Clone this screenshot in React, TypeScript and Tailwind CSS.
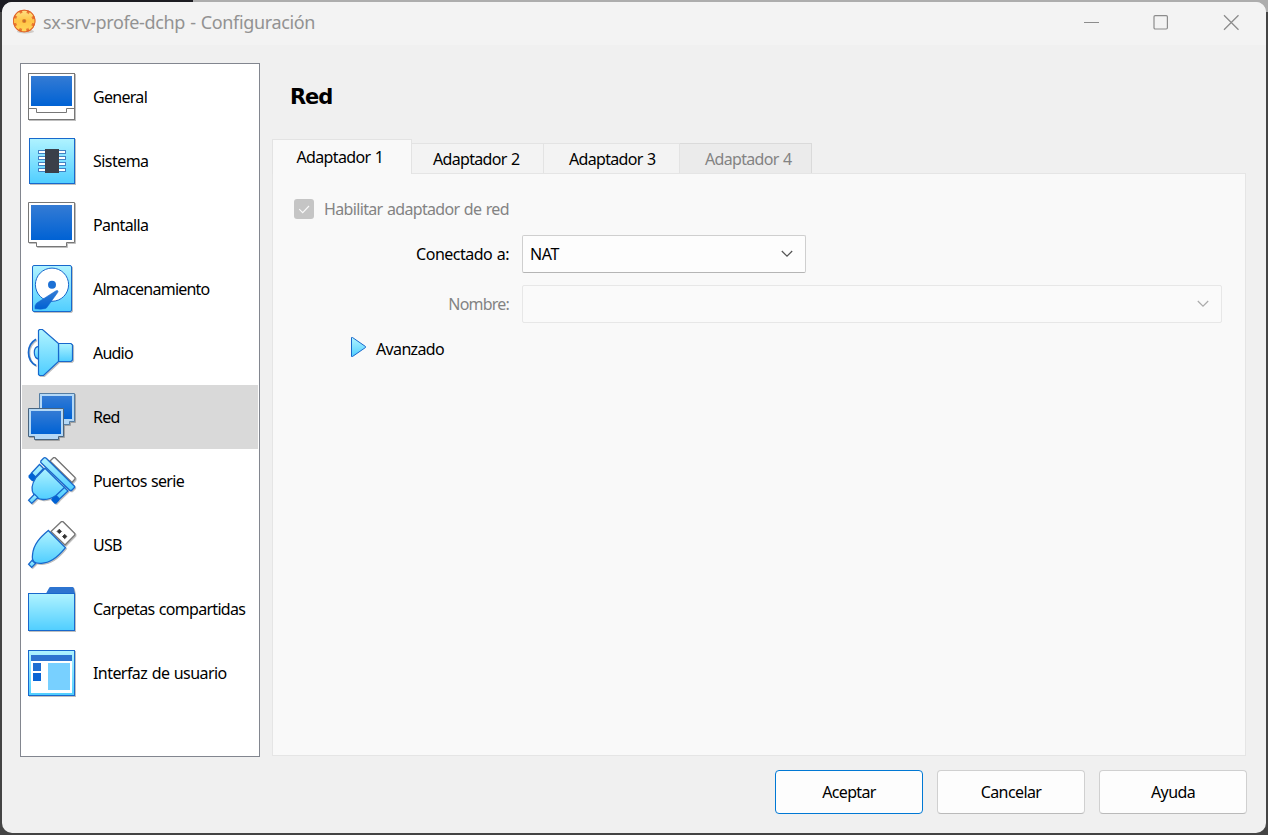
import type { ReactNode } from "react";

const CY = "url(#cyan)";
const BL = "url(#blue)";
const EDGE = "#1868cc";

function Defs() {
  return (
    <svg width="0" height="0" className="absolute">
      <defs>
        <linearGradient id="cyan" x1="0" y1="0" x2="0" y2="1">
          <stop offset="0" stopColor="#b0f3ff" />
          <stop offset="1" stopColor="#50ceff" />
        </linearGradient>
        <linearGradient id="blue" x1="0" y1="0" x2="0" y2="1">
          <stop offset="0" stopColor="#347bd4" />
          <stop offset="1" stopColor="#0062d4" />
        </linearGradient>
        <linearGradient id="gear" gradientUnits="userSpaceOnUse" x1="0" y1="2" x2="0" y2="22">
          <stop offset="0" stopColor="#ffdf80" />
          <stop offset="0.5" stopColor="#ffc446" />
          <stop offset="1" stopColor="#ffd75a" />
        </linearGradient>
      </defs>
    </svg>
  );
}

function Icon({ children }: { children: ReactNode }) {
  return (
    <svg
      width="48"
      height="48"
      viewBox="0 0 48 48"
      fill="none"
      className="shrink-0 overflow-visible drop-shadow-[1px_1px_0px_rgba(0,0,0,0.25)]"
    >
      {children}
    </svg>
  );
}

const items: { label: string; track: string; icon: ReactNode }[] = [
  {
    label: "General",
    track: "tracking-[-0.7px]",
    icon: (
      <>
        <rect x=".5" y=".5" width="46" height="46" fill="#fff" stroke="#777" />
        <rect x="3" y="3" width="41" height="30" fill={BL} />
        <path d="M0 35.5H8.5V39.5H38.5V35.5H47" stroke="#777" />
      </>
    ),
  },
  {
    label: "Sistema",
    track: "tracking-[-0.55px]",
    icon: (
      <>
        <rect x="1.5" y="1.5" width="45" height="45" fill={CY} stroke={EDGE} />
        {[13.5, 19.5, 25.5, 31.5].map((y) => (
          <rect key={y} x="10.5" y={y} width="27" height="3" fill="#fff" stroke="#4282c4" />
        ))}
        <rect x="17" y="12" width="14" height="24" fill="#3a3f49" />
      </>
    ),
  },
  {
    label: "Pantalla",
    track: "tracking-[-0.65px]",
    icon: (
      <>
        <path d="M.5 1.5H46.5V41.5H38.5V45.5H8.5V41.5H.5Z" fill="#fff" stroke="#777" />
        <rect x="3" y="4" width="41" height="35" fill={BL} />
      </>
    ),
  },
  {
    label: "Almacenamiento",
    track: "tracking-[-0.77px]",
    icon: (
      <>
        <rect x="4.5" y=".5" width="39" height="46" rx="1.5" fill={CY} stroke={EDGE} />
        <circle cx="24" cy="19.7" r="16.6" fill="#fff" stroke={EDGE} />
        <circle cx="24" cy="19.7" r="4" fill="#1c70d4" />
        <path
          d="M29.7 25.7Q29 25.2 27.7 26L8.5 38.2Q6.6 40 7 43.8Q13.5 44.6 17.5 43.5Q18.8 43 19.6 41.4L29.6 27.6Q30.3 26.4 29.7 25.7Z"
          fill={BL}
          stroke="#0f67d2"
          strokeWidth=".6"
        />
      </>
    ),
  },
  {
    label: "Audio",
    track: "tracking-[-0.8px]",
    icon: (
      <g strokeWidth="1.2">
        <path d="M8 10.2C-2 16-2 31 8 36.6" stroke={EDGE} strokeWidth="1.7" />
        <path d="M11 17.3Q6.3 17.5 6.3 23.5T11 30Z" fill={CY} stroke={EDGE} />
        <path d="M30.5 14.5H43L44.5 16V31L43 32.5H30.5Z" fill={CY} stroke={EDGE} />
        <path d="M10.5 1.5L11.5 .5H14.5L30.5 14.5V32.5L15.5 46.5H11.5L10.5 45.5Z" fill={CY} stroke={EDGE} />
      </g>
    ),
  },
  {
    label: "Red",
    track: "tracking-[-0.7px]",
    icon: (
      <>
        <path d="M11.5 .5H46.5V28.5H41.5V31.5H17.5V28.5H11.5Z" fill="#b4d8f6" stroke="#547da3" />
        <rect x="14" y="3" width="30" height="23" fill={BL} />
        <path d="M.5 15.5H35.5V43.5H30.5V46.5H6.5V43.5H.5Z" fill="#b4d8f6" stroke="#48647f" />
        <rect x="3" y="18" width="30" height="23" fill={BL} />
      </>
    ),
  },
  {
    label: "Puertos serie",
    track: "tracking-[-0.66px]",
    icon: (
      <g strokeWidth="1.3">
        <path d="M22 4L25.5 .7H27L47 20.5V22L44 25.5Z" fill="#fff" stroke="#777" />
        <path d="M11.5 7.5L15.5 11.5L7.5 20L3.5 16ZM36 30L40 34L31.5 42L27.5 38Z" fill={CY} stroke={EDGE} />
        <path
          d="M4 16L8.2 20.3V22L6 24H4L.5 20.5V18.5L3 16ZM28 38.5L31.5 42L31.3 43.5L28.2 46.7H26.7L23.3 43.2V42L26.5 38.7Z"
          fill="#0062d4"
        />
        <path d="M17 11.2L36.5 30.5L28 38.5C19 44.5 9.5 43.3 6 38C2.3 32.5 4 26.5 8 20.5Z" fill={CY} stroke={EDGE} />
        <path d="M15.5 1.2Q16.8 .1 18.2 1.2L46.5 29.2V30.5L43.5 33.5H42L12.8 5.5V4Z" fill={CY} stroke={EDGE} />
        <path d="M6.5 37.2L9.8 40.4L3.7 46.4L.6 43.3Z" fill={CY} stroke={EDGE} />
      </g>
    ),
  },
  {
    label: "USB",
    track: "tracking-[-0.7px]",
    icon: (
      <g strokeWidth="1.3">
        <path d="M23 10.5L33.3 .7H35L46.8 12.5V14L37 24Z" fill="#fff" stroke="#777" />
        <path
          d="M31.3 8.2L33.5 10.4L31.3 12.6L29.1 10.4ZM36.7 13.3L38.9 15.5L36.7 17.7L34.5 15.5Z"
          fill="#333"
          stroke="#333"
          strokeWidth=".8"
        />
        <path d="M20.3 9.5L37.5 26.7C30 36 22.5 42.5 13 42.3Q8.5 42.5 6.3 41Q3.7 39 4.5 34C5.3 23 12.5 16 20.3 9.5Z" fill={CY} stroke={EDGE} />
        <path d="M4 39.4L7.5 42.5L3.7 46.4L.6 43.3Z" fill={CY} stroke={EDGE} />
      </g>
    ),
  },
  {
    label: "Carpetas compartidas",
    track: "tracking-[-0.69px]",
    icon: (
      <>
        <path d="M18 8.5L21.3 2.5Q21.5 2 22.5 2H44.5Q45.5 2 45.8 3L47 8.5Z" fill="#2d74d0" />
        <rect x=".5" y="8.5" width="46" height="37" fill={CY} stroke={EDGE} />
      </>
    ),
  },
  {
    label: "Interfaz de usuario",
    track: "tracking-[-0.56px]",
    icon: (
      <>
        <rect x=".5" y="1.5" width="46" height="45" fill={CY} stroke={EDGE} />
        <rect x="3" y="6" width="41" height="38" fill="#fff" />
        <rect x="3" y="6" width="41" height="6" fill="#2d74d0" />
        <rect x="5" y="14" width="8" height="8" fill="#1f6fd2" />
        <rect x="5" y="24" width="8" height="8" fill="#0864d4" />
        <rect x="20" y="14" width="22" height="27" fill="#78d0ff" />
      </>
    ),
  },
];

function Chevron({ color }: { color: string }) {
  return (
    <svg width="12" height="8" viewBox="0 0 12 8" fill="none">
      <path d="M.8 1L6 6.2L11.2 1" stroke={color} strokeWidth="1.2" />
    </svg>
  );
}

function TitleBar() {
  return (
    <header className="flex h-[43px] shrink-0 items-start bg-[#f3f3f3] pl-[10px]">
      <svg width="25" height="25" viewBox="0 0 25 25" className="mt-[7px]">
        <ellipse cx="13.5" cy="22.4" rx="8.5" ry="2" fill="#cfcac6" />
        <circle cx="12.2" cy="12" r="11.2" fill="#ea7a30" />
        <circle cx="12.2" cy="12" r="10.6" fill="none" stroke="#e0642a" strokeWidth="1.2" />
        <circle cx="12.2" cy="12" r="8.3" fill="url(#gear)" />
        <circle
          cx="12.2"
          cy="12"
          r="9"
          fill="none"
          stroke="url(#gear)"
          strokeWidth="2.6"
          strokeDasharray="4.4 2.67"
          strokeDashoffset="2.2"
        />
        <circle cx="12.2" cy="12" r="2.1" fill="#dd7e25" />
        <circle cx="12.2" cy="12" r="1" fill="#b8703a" />
      </svg>
      <h1 className="ml-[6px] mt-[7px] whitespace-nowrap font-['Noto_Sans','Open_Sans',sans-serif] text-[18px] leading-[26px] tracking-[-0.35px] text-[#929292]">
        sx-srv-profe-dchp - Configuración
      </h1>
      <div className="ml-auto mr-[26px] mt-[12px] flex text-[#8c8c8c]">
        <svg width="16" height="17" viewBox="0 0 16 17" fill="none" stroke="currentColor">
          <path d="M0 8.5H15" />
        </svg>
        <svg width="16" height="17" viewBox="0 0 16 17" fill="none" stroke="currentColor" strokeWidth="1.2" className="ml-[53px]">
          <rect x="1" y="1.6" width="13.4" height="13.4" rx="1.2" />
        </svg>
        <svg width="17" height="17" viewBox="0 0 17 17" fill="none" stroke="currentColor" strokeWidth="1.3" className="ml-[54px]">
          <path d="M1 1.2L15.5 15.7M15.5 1.2L1 15.7" />
        </svg>
      </div>
    </header>
  );
}

export default function App() {
  return (
    <div className="h-[835px] w-[1268px] overflow-hidden bg-[linear-gradient(to_right,#1c1c22_193px,#adadad_193px)] font-['Noto_Sans','Open_Sans',sans-serif] text-[16px] text-black [word-spacing:0.8px]">
      <Defs />
      <div className="h-full bg-[linear-gradient(to_bottom,transparent_12px,#444_12px)] p-[2px]">
        <div className="flex h-full flex-col overflow-hidden rounded-[10px] bg-[#f0f0f0]">
          <TitleBar />
          <main className="flex pl-[18px] pt-[18px]">
            <nav className="h-[694px] w-[240px] shrink-0 border border-[#82868f] bg-white p-px">
              {items.map((it) => (
                <div
                  key={it.label}
                  className={`flex h-16 items-center pl-[6px] ${it.label === "Red" ? "bg-[#d9d9d9]" : ""}`}
                >
                  <Icon>{it.icon}</Icon>
                  <span className={`ml-[17px] whitespace-nowrap ${it.track}`}>{it.label}</span>
                </div>
              ))}
            </nav>
            <div className="ml-[12px] w-[974px]">
              <h2 className="ml-[18px] h-[76px] pt-[17px] font-['DejaVu_Sans','Noto_Sans',sans-serif] text-[21px] font-bold leading-[34px] tracking-[-1.1px]">
                Red
              </h2>
              <div className="flex h-[34px] items-end">
                <div className="z-10 -mb-px h-[35px] w-[140px] shrink-0 border border-b-0 border-[#e3e3e3] bg-[#f9f9f9] pl-[23.5px] leading-[35px] tracking-[-0.65px]">
                  Adaptador 1
                </div>
                <div className="h-[30px] w-[132px] border-r border-t border-[#e3e3e3] bg-[#f3f3f3] pl-[21px] leading-[30px] tracking-[-0.68px]">
                  Adaptador 2
                </div>
                <div className="h-[30px] w-[136px] border-r border-t border-[#e3e3e3] bg-[#f3f3f3] pl-[25px] leading-[30px] tracking-[-0.68px]">
                  Adaptador 3
                </div>
                <div className="h-[30px] w-[132px] border-r border-t border-[#dadada] bg-[#ebebeb] pl-[25px] leading-[30px] tracking-[-0.68px] text-[#838383]">
                  Adaptador 4
                </div>
              </div>
              <section className="h-[583px] border border-[#e5e5e5] bg-[#f9f9f9] pt-[22px]">
                <div className="ml-[21px] flex h-[26px] items-center text-[#838383]">
                  <svg width="20" height="20" viewBox="0 0 20 20" fill="none">
                    <rect width="20" height="20" rx="3" fill="#c5c5c5" />
                    <path d="M5.2 10.2L8.7 13.7L15 7" stroke="#fafafa" strokeWidth="1.1" />
                  </svg>
                  <span className="ml-[10px] tracking-[-0.65px]">Habilitar adaptador de red</span>
                </div>
                <div className="mt-[13px] flex h-[38px] items-center">
                  <span className="w-[237px] pr-[1px] text-right tracking-[-0.5px]">Conectado a:</span>
                  <div className="ml-[12px] flex h-[38px] w-[284px] items-center justify-between rounded-[2px] border border-[#cfcfcf] border-b-[#b5b5b5] bg-[#fdfdfd] pl-[7px] pr-[12px]">
                    <span className="tracking-[-0.4px]">NAT</span>
                    <Chevron color="#555" />
                  </div>
                </div>
                <div className="mt-[12px] flex h-[38px] items-center">
                  <span className="w-[237px] pr-[1px] text-right tracking-[-0.8px] text-[#838383]">Nombre:</span>
                  <div className="ml-[12px] flex h-[38px] w-[700px] items-center justify-end rounded-[2px] border border-[#e7e7e7] bg-[#fafafa] pr-[12px]">
                    <Chevron color="#aaa" />
                  </div>
                </div>
                <div className="ml-[77px] mt-[13px] flex h-[26px] items-center">
                  <svg width="18" height="22" viewBox="0 0 18 22" className="-mt-[5px]">
                    <path d="M1.5 1.5H2.5L15.5 10.5V11.5L2.5 20.5H1.5Z" fill={CY} stroke={EDGE} />
                  </svg>
                  <span className="ml-[8px] tracking-[-0.65px]">Avanzado</span>
                </div>
              </section>
            </div>
          </main>
          <footer className="ml-auto mr-[19px] mt-[13px] flex gap-[14px]">
            <button className="h-[44px] w-[148px] rounded-[4px] border border-[#0078d4] bg-[#fdfdfd] tracking-[-0.65px]">
              Aceptar
            </button>
            <button className="h-[44px] w-[148px] rounded-[4px] border border-[#d0d0d0] border-b-[#bababa] bg-[#fdfdfd] tracking-[-0.6px]">
              Cancelar
            </button>
            <button className="h-[44px] w-[148px] rounded-[4px] border border-[#d0d0d0] border-b-[#bababa] bg-[#fdfdfd] tracking-[-0.6px]">
              Ayuda
            </button>
          </footer>
        </div>
      </div>
    </div>
  );
}
